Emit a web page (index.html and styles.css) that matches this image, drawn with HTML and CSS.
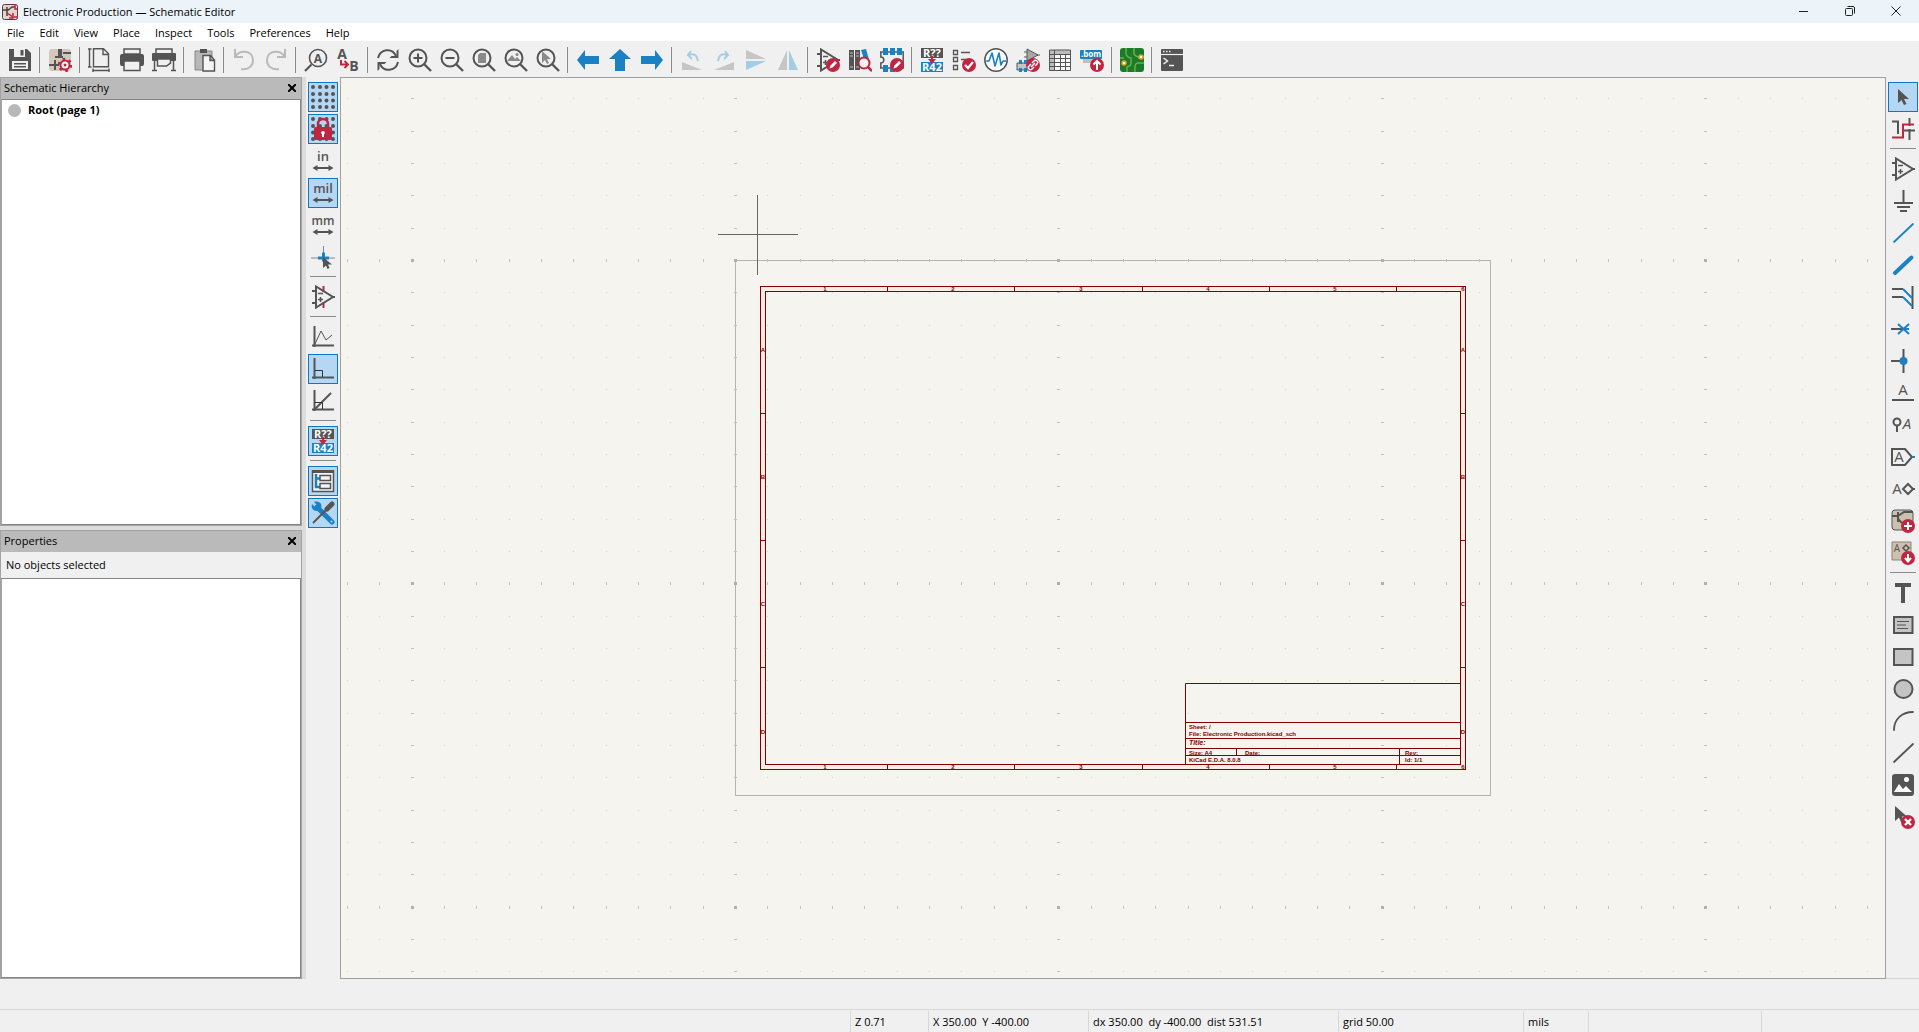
FILE: index.html
```html
<!DOCTYPE html>
<html lang="en">
  <head>
    <meta charset="UTF-8" />
    <meta name="viewport" content="width=device-width, initial-scale=1.0" />
    <title>Electronic Production — Schematic Editor</title>
    <link rel="stylesheet" href="styles.css">
  </head>
  <body>
    <!-- shapes used by more than one icon -->
    <svg class="defs" aria-hidden="true">
      <symbol id="lens" viewBox="0 0 24 24">
        <circle cx="10" cy="10" r="8.500" fill="none" stroke="#545454" stroke-width="2" />
        <path d="M16 16l7 7" stroke="#545454" stroke-width="2.400" />
      </symbol>
      <symbol id="opamp" viewBox="0 0 24 24">
        <path d="M5 1.500v21L22 12zM1 6h4M1 18h4M21 12h3" fill="none" stroke="#545454" stroke-width="2" />
        <path d="M7 8.500h5M7 14.500h5M9.500 12v5" stroke="#545454" stroke-width="1.500" />
      </symbol>
      <symbol id="slash" viewBox="0 0 24 24">
        <circle cx="17" cy="17" r="7" fill="#bf2641" />
        <path d="M13.500 20.500l1-3 4.500-4.500 2 2-4.500 4.500z" fill="#fff" />
      </symbol>
      <symbol id="annotate" viewBox="0 0 24 24">
        <path d="M1 0h22v10H1z" fill="#545454" />
        <path d="M1 14h22v10H1z" fill="#1a81c4" />
        <text x="12" y="9" class="icon-text bold" font-size="11" fill="#fff">R??</text>
        <text x="12" y="23" class="icon-text bold" font-size="11" fill="#fff">R42</text>
        <path d="M11 8h2v3h3l-4 5-4-5h3z" fill="#bf2641" />
      </symbol>
      <symbol id="dots" viewBox="0 0 24 24">
        <path d="M2 2h.01M9 2h.01M15.500 2h.01M22 2h.01M2 9h.01M9 9h.01M15.500 9h.01M22 9h.01M2 15.500h.01M9 15.500h.01M15.500 15.500h.01M22 15.500h.01M2 22h.01M9 22h.01M15.500 22h.01M22 22h.01" stroke="#545454" stroke-width="4" stroke-linecap="round" />
      </symbol>
      <symbol id="unit-arrow" viewBox="0 0 24 24">
        <path d="M5 19h14" stroke="#545454" stroke-width="2" />
        <path d="M1.500 19l5-3v6zM22.500 19l-5-3v6z" fill="#545454" />
      </symbol>
      <symbol id="axes" viewBox="0 0 24 24">
        <path d="M3.500 1v21M1 20.500h22" stroke="#545454" stroke-width="2" fill="none" />
      </symbol>
    </svg>

    <header class="titlebar">
      <svg class="app-icon" viewBox="0 0 16 16">
        <rect x=".5" y=".5" width="15" height="15" rx="2" fill="#e3d3c8" stroke="#5a3b40" />
        <path d="M0 6h5M5 3v9M5 7l5-4h3" fill="none" stroke="#444" stroke-width="1.500" />
        <path d="M5 9l6 4M11 9v5H7M13 0v5h3M12 13h4" fill="none" stroke="#bf2641" stroke-width="1.500" />
      </svg>
      <h1>Electronic Production — Schematic Editor</h1>
      <div class="window-buttons">
        <button aria-label="Minimize"><svg viewBox="0 0 10 10"><path d="M0 5.500h9" /></svg></button>
        <button aria-label="Restore"><svg viewBox="0 0 10 10"><rect x=".5" y="2.500" width="7" height="7" rx="1" /><path d="M2.500 .5H8q1.500 0 1.500 1.500v5.500" /></svg></button>
        <button aria-label="Close"><svg viewBox="0 0 10 10"><path d="M.5 .5l9 9M9.500 .5l-9 9" /></svg></button>
      </div>
    </header>

    <nav class="menubar">
      <button>File</button>
      <button>Edit</button>
      <button>View</button>
      <button>Place</button>
      <button>Inspect</button>
      <button>Tools</button>
      <button>Preferences</button>
      <button>Help</button>
    </nav>

    <div class="toolbar top" role="toolbar" aria-label="Main toolbar">
      <button aria-label="Save"><svg viewBox="0 0 24 24"><path d="M1 1h18l4 4v18H1z" fill="#545454" /><path d="M6 1h11v8H6zM4 13h16v8H4z" fill="#f0f0f0" /><path d="M12.500 2h3v5.500h-3zM6 15h12v1.500H6zM6 18h12v1.500H6z" fill="#545454" /></svg></button>
      <hr>
      <button aria-label="Schematic Setup"><svg viewBox="0 0 24 24"><rect x="1" y="1" width="22" height="22" rx="3" fill="#d3c8bb" /><path d="M1 17h6M7 12v10M7 17h4M11 1v8M7 9h8M15 5h8" fill="none" stroke="#545454" stroke-width="2" /><path d="M12 1v7" stroke="#545454" stroke-width="4" /><circle cx="17" cy="17" r="4.500" fill="#fff" stroke="#bf2641" stroke-width="2" /><circle cx="17" cy="17" r="6" fill="none" stroke="#bf2641" stroke-width="2.500" stroke-dasharray="2.500 3.780" /><circle cx="17" cy="17" r="1.500" fill="#bf2641" /></svg></button>
      <hr>
      <button aria-label="Page Settings"><svg viewBox="0 0 24 24"><path d="M5.500 .8h10l5 5v13h-15zM15 1v5.500h5.500M1.500 1v18M0 1h3.500M0 19h3.500M5 22.500h16M5 20.500v3.500M21 20.500v3.500" fill="none" stroke="#545454" stroke-width="1.400" /></svg></button>
      <button aria-label="Print"><svg viewBox="0 0 24 24"><path d="M4 1h16v5H4z" fill="#f0f0f0" stroke="#545454" stroke-width="1.500" /><rect y="6" width="24" height="12" rx="2" fill="#545454" /><path d="M4 13h16v9.500H4z" fill="#f0f0f0" stroke="#545454" stroke-width="1.500" /></svg></button>
      <button aria-label="Plot"><svg viewBox="0 0 24 24"><path d="M4 1h16v5H4z" fill="#f0f0f0" stroke="#545454" stroke-width="1.500" /><rect y="5" width="24" height="8" rx="1" fill="#545454" /><path d="M5.500 11h13v4l-4 3h-9zM2.500 12v11M21.500 12v11M0 22.500h5M19 22.500h5" fill="#f0f0f0" stroke="#545454" stroke-width="1.500" /></svg></button>
      <hr>
      <button aria-label="Paste"><svg viewBox="0 0 24 24"><path d="M3 3h17v19H3z" fill="#b8b8b8" stroke="#858585" /><path d="M8 1h7v4H8z" fill="#545454" /><path d="M11 7.500h7.500L22.500 12v11H11zM18 8v4.500h4.500" fill="#f5f5f5" stroke="#545454" stroke-width="1.400" /></svg></button>
      <hr>
      <button aria-label="Undo" disabled><svg viewBox="0 0 24 24"><path d="M3 1v8h8M3 9c4-8 18-7 18 3 0 7-6 10-12 9" fill="none" stroke="#b9b9b9" stroke-width="2" /></svg></button>
      <button aria-label="Redo" disabled><svg viewBox="0 0 24 24"><path d="M21 1v8h-8M21 9C17 1 3 2 3 12c0 7 6 10 12 9" fill="none" stroke="#b9b9b9" stroke-width="2" /></svg></button>
      <hr>
      <button aria-label="Find"><svg viewBox="0 0 24 24"><circle cx="14" cy="10" r="8.500" fill="none" stroke="#545454" stroke-width="1.600" /><path d="M7.500 16.500L1 23" stroke="#545454" stroke-width="2.200" /><text x="14" y="14.500" class="icon-text bold" font-size="12">A</text></svg></button>
      <button aria-label="Find and Replace"><svg viewBox="0 0 24 24"><text x="6" y="11" class="icon-text bold" font-size="14">A</text><text x="18" y="23" class="icon-text bold" font-size="14">B</text><path d="M5 12v4.500h6M8.500 13l3.500 3.500L8.500 20" fill="none" stroke="#bf2641" stroke-width="2" /></svg></button>
      <hr>
      <button aria-label="Refresh"><svg viewBox="0 0 24 24"><path d="M2 10C4 1 16-1 20 8M22 14c-2 9-14 11-18 2" fill="none" stroke="#545454" stroke-width="2" /><path d="M22.500 1v9h-9l2-2h5V3zM1.500 23v-9h9l-2 2h-5v5z" fill="#545454" /></svg></button>
      <button aria-label="Zoom In"><svg viewBox="0 0 24 24"><use href="#lens" /><path d="M5.500 10h9M10 5.500v9" stroke="#545454" stroke-width="2" /></svg></button>
      <button aria-label="Zoom Out"><svg viewBox="0 0 24 24"><use href="#lens" /><path d="M5.500 10h9" stroke="#545454" stroke-width="2" /></svg></button>
      <button aria-label="Zoom to Fit"><svg viewBox="0 0 24 24"><use href="#lens" /><path d="M8 5h6v10H6V7z" fill="#8a8a8a" /></svg></button>
      <button aria-label="Zoom to Objects"><svg viewBox="0 0 24 24"><use href="#lens" /><path d="M3 13l5-6 3 4 2-2 4 4z" fill="#8a8a8a" /><circle cx="13" cy="6.500" r="1.500" fill="#8a8a8a" /></svg></button>
      <button aria-label="Zoom to Selection"><svg viewBox="0 0 24 24"><use href="#lens" /><path d="M6 3v12l3-3 2 4 2-1-2-4h4z" fill="#8a8a8a" /></svg></button>
      <hr>
      <button aria-label="Navigate Back"><svg viewBox="0 0 24 24"><path d="M1 12L9 2v6h14v8H9v6z" fill="#1a81c4" /></svg></button>
      <button aria-label="Navigate Up"><svg viewBox="0 0 24 24"><path d="M12 1l11 10h-6v12H7V11H1z" fill="#1a81c4" /></svg></button>
      <button aria-label="Navigate Forward"><svg viewBox="0 0 24 24"><path d="M23 12L15 2v6H1v8h14v6z" fill="#1a81c4" /></svg></button>
      <hr>
      <button aria-label="Rotate Counterclockwise" disabled><svg viewBox="0 0 24 24"><path d="M2 14v8h20z" fill="#c6c6c6" /><path d="M11 3L8 7l4 4M9 7c5-2 8 0 9 6" fill="none" stroke="#a3cde6" stroke-width="2" /></svg></button>
      <button aria-label="Rotate Clockwise" disabled><svg viewBox="0 0 24 24"><path d="M22 14v8H2z" fill="#c6c6c6" /><path d="M13 3l3 4-4 4M15 7c-5-2-8 0-9 6" fill="none" stroke="#a3cde6" stroke-width="2" /></svg></button>
      <button aria-label="Mirror Vertically" disabled><svg viewBox="0 0 24 24"><path d="M2 2v9h20z" fill="#c6c6c6" /><path d="M2 13v9l20-9z" fill="#a3cde6" /></svg></button>
      <button aria-label="Mirror Horizontally" disabled><svg viewBox="0 0 24 24"><path d="M2 22h9V2z" fill="#c6c6c6" /><path d="M13 2v20h9z" fill="#a3cde6" /></svg></button>
      <hr>
      <button aria-label="Symbol Editor"><svg viewBox="0 0 24 24"><use href="#opamp" /><use href="#slash" /></svg></button>
      <button aria-label="Symbol Library Browser"><svg viewBox="0 0 24 24"><path d="M1 2h5v20H1zM7 2h5v20H7z" fill="#545454" /><path d="M2 5h3M2 8h3M8 5h3M8 8h3M2 19h3M8 19h3" stroke="#bbb" /><path d="M13 2l5-1 4 14-4 2z" fill="#1a81c4" /><circle cx="16" cy="15" r="5.500" fill="#f4f4f4" stroke="#bf2641" stroke-width="2" /><path d="M20 19l4 4" stroke="#bf2641" stroke-width="2.500" /></svg></button>
      <button aria-label="Footprint Editor"><svg viewBox="0 0 24 24"><path d="M.8 4h22.400v16H.8v-5a3 3 0 0 0 0-6z" fill="none" stroke="#545454" stroke-width="1.500" /><path d="M3 0h5v7H3zM10 0h5v7h-5zM17 0h5v7h-5zM3 17h5v7H3zM10 17h5v7h-5z" fill="#1a81c4" /><use href="#slash" /></svg></button>
      <hr>
      <button aria-label="Annotate Schematic"><svg viewBox="0 0 24 24"><use href="#annotate" /></svg></button>
      <button aria-label="Electrical Rules Checker"><svg viewBox="0 0 24 24"><path d="M1.500 2.500h4v4h-4zM1.500 9.500h4v4h-4zM1.500 17.500h4v4h-4zM9 4.500h9M9 11.500h5" fill="none" stroke="#545454" stroke-width="1.300" /><circle cx="17" cy="17" r="7" fill="#bf2641" /><path d="M13 17l3 3 5-6" fill="none" stroke="#fff" stroke-width="2.200" /></svg></button>
      <button aria-label="Simulator"><svg viewBox="0 0 24 24"><circle cx="12" cy="12" r="11.200" fill="#fbfbfb" stroke="#545454" stroke-width="1.500" /><path d="M2 13h3l3-8 3 13 4-13 2 12 2-4h3" fill="none" stroke="#1a81c4" stroke-width="1.600" stroke-linejoin="round" /></svg></button>
      <button aria-label="Assign Footprints"><svg viewBox="0 0 24 24"><path d="M11 1v12l11-6z" fill="#a8a8a8" stroke="#545454" /><path d="M8 4h3M8 9h3M21 7h3" stroke="#545454" /><path d="M1 15h14v7H1z" fill="#c5c5c5" stroke="#545454" /><path d="M3 12h3v4H3zM8 12h3v4H8zM3 20h3v4H3zM8 20h3v4H8z" fill="#1a81c4" /><circle cx="17" cy="17" r="7" fill="#bf2641" /><path d="M16 15l2-2a2 2 0 0 1 3 3l-2 2M18 19l-2 2a2 2 0 0 1-3-3l2-2M15 19l4-4" fill="none" stroke="#fff" stroke-width="1.400" /></svg></button>
      <button aria-label="Edit Symbol Fields"><svg viewBox="0 0 24 24"><path d="M1 2h22v20H1z" fill="#fafafa" /><path d="M1 2h5v20H1zM1 2h22v4H1z" fill="#bdbdbd" /><path d="M1.500 2h21v20.500h-21zM1.500 6.500h21M1.500 10.500h21M1.500 14.500h21M1.500 18.500h21M6.500 2v20M12.500 6v16M17.500 6v16" fill="none" stroke="#545454" /></svg></button>
      <button aria-label="Bill of Materials"><svg viewBox="0 0 24 24"><path d="M3 10h18v5H3z" fill="#c0c0c0" /><rect y="2" width="22" height="9" rx="1" fill="#1a81c4" /><text x="11" y="9" class="icon-text bold" font-size="8" fill="#fff">.bom</text><circle cx="17" cy="17" r="7" fill="#bf2641" /><path d="M17 22v-8M13.500 16.500L17 13l3.500 3.500" fill="none" stroke="#fff" stroke-width="2" /></svg></button>
      <hr>
      <button aria-label="PCB Editor"><svg viewBox="0 0 24 24"><rect width="24" height="24" rx="3" fill="#1b7a2b" /><path d="M6 0v5q0 4 5 5v5q0 3-4 4v5M14 0v4q-1 3 4 5h6M24 15h-6q-4 0-3 9M0 10h4" fill="none" stroke="#6ab23c" stroke-width="1.500" /><circle cx="21" cy="9" r="2" fill="#fff" stroke="#e8a326" stroke-width="1.500" /><circle cx="4" cy="15" r="2" fill="#fff" stroke="#e8a326" stroke-width="1.500" /></svg></button>
      <hr>
      <button aria-label="Scripting Console"><svg viewBox="0 0 24 24"><rect x="1" y="1" width="22" height="22" rx="1" fill="#545454" /><path d="M1 6.500h22" stroke="#f0f0f0" stroke-width="1.200" /><path d="M3 3.500h1.500M6 3.500h1.500M9 3.500h1.500" stroke="#f0f0f0" stroke-width="1.500" /><path d="M3.500 10l4 3-4 3M9 17.500h5" fill="none" stroke="#f0f0f0" stroke-width="1.500" /></svg></button>
    </div>

    <div class="workspace">
      <aside class="dock">
        <section class="pane hierarchy">
          <h2>Schematic Hierarchy <button aria-label="Close hierarchy"><svg viewBox="0 0 8 8"><path d="M0 0l8 8M8 0L0 8" /></svg></button></h2>
          <ul class="list">
            <li><span class="dot"></span>Root (page 1)</li>
          </ul>
        </section>
        <section class="pane properties">
          <h2>Properties <button aria-label="Close properties"><svg viewBox="0 0 8 8"><path d="M0 0l8 8M8 0L0 8" /></svg></button></h2>
          <p>No objects selected</p>
          <div class="list"></div>
        </section>
      </aside>

      <div class="toolbar side" role="toolbar" aria-label="Display options">
        <button aria-label="Show Grid" aria-pressed="true"><svg viewBox="0 0 24 24"><use href="#dots" /></svg></button>
        <button aria-label="Grid Overrides" aria-pressed="true"><svg viewBox="0 0 24 24"><use href="#dots" /><path d="M7 11V7a5 5 0 0 1 10 0v4" fill="none" stroke="#bf2641" stroke-width="2.500" /><rect x="3" y="10" width="18" height="13" rx="1.500" fill="#bf2641" /><path d="M12 14a1.800 1.800 0 0 1 1 3.300V20h-2v-2.700a1.800 1.800 0 0 1 1-3.300z" fill="#fff" /></svg></button>
        <button aria-label="Inches"><svg viewBox="0 0 24 24"><text x="12" y="12" class="icon-text semi" font-size="13">in</text><use href="#unit-arrow" /></svg></button>
        <button aria-label="Mils" aria-pressed="true"><svg viewBox="0 0 24 24"><text x="12" y="12" class="icon-text semi" font-size="13">mil</text><use href="#unit-arrow" /></svg></button>
        <button aria-label="Millimeters"><svg viewBox="0 0 24 24"><text x="12" y="12" class="icon-text semi" font-size="12">mm</text><use href="#unit-arrow" /></svg></button>
        <button aria-label="Full-Window Crosshairs"><svg viewBox="0 0 24 24"><path d="M0 13h24M12.500 1v20" stroke="#888" /><path d="M7 13h11M12.500 7.500v9" stroke="#1a81c4" stroke-width="3" /><path d="M12 12v11l3-2.500 1.500 3.500 2-1-1.500-3.500h4z" fill="#545454" /></svg></button>
        <hr>
        <button aria-label="Show Hidden Pins"><svg viewBox="0 0 24 24"><path d="M12.500 1v6M12.500 17v6" stroke="#bf2641" stroke-width="2" /><use href="#opamp" /></svg></button>
        <hr>
        <button aria-label="Free Angle"><svg viewBox="0 0 24 24"><use href="#axes" /><path d="M4 19l6-13 5 9 6-5" fill="none" stroke="#545454" /></svg></button>
        <button aria-label="90 Degree Lines" aria-pressed="true"><svg viewBox="0 0 24 24"><use href="#axes" /><path d="M4 13.500h7.500V20" fill="none" stroke="#333" /></svg></button>
        <button aria-label="45 Degree Lines"><svg viewBox="0 0 24 24"><use href="#axes" /><path d="M4 20L20 4" stroke="#545454" stroke-width="2" /><path d="M4 13.500h7.500V20" fill="none" stroke="#333" /></svg></button>
        <hr>
        <button aria-label="Annotate Automatically" aria-pressed="true"><svg viewBox="0 0 24 24"><use href="#annotate" /></svg></button>
        <hr>
        <button aria-label="Hierarchy Navigator" aria-pressed="true"><svg viewBox="0 0 24 24"><path d="M1.500 2h21v20.500h-21z" fill="#f5f5f5" stroke="#545454" stroke-width="1.500" /><path d="M1 1h22v3H1z" fill="#545454" /><path d="M5 5v13h4M5 9.500h4" fill="none" stroke="#1a81c4" stroke-width="2.500" /><path d="M9 6.500h10.500v5H9zM9 14.500h10.500v5H9z" fill="#f5f5f5" stroke="#545454" stroke-width="1.500" /></svg></button>
        <button aria-label="Properties Manager" aria-pressed="true"><svg viewBox="0 0 24 24"><path d="M6 6l15 15" stroke="#1a81c4" stroke-width="5" stroke-linecap="round" /><path d="M3 1l4 4-2 2-4-4c-1 4 1 7 5 7 4-1 5-4 4-7-1-2-4-3-7-2z" fill="#1a81c4" /><path d="M2 22L15 9" stroke="#545454" stroke-width="1.800" /><path d="M16 8l5-5" stroke="#545454" stroke-width="5" stroke-linecap="round" /><circle cx="20.500" cy="20.500" r="1" fill="#b5daf7" /></svg></button>
      </div>

      <main class="editor">
        <!-- A4 page with the default drawing sheet -->
        <svg class="sheet" viewBox="0 0 756 536" role="img" aria-label="Drawing sheet">
          <rect class="page" x=".5" y=".5" width="755" height="535" />
          <path class="margin" d="M25 26h706v484H25zM30 31v474h696V31z" />
          <g class="frame">
            <rect x="25.500" y="26.500" width="705" height="483" />
            <rect x="30.500" y="31.500" width="695" height="473" />
            <path d="M152.500 26v5M279.500 26v5M407.500 26v5M534.500 26v5M661.500 26v5" />
            <path d="M152.500 505v5M279.500 505v5M407.500 505v5M534.500 505v5M661.500 505v5" />
            <path d="M25 153.500h5M25 280.500h5M25 407.500h5M726 153.500h5M726 280.500h5M726 407.500h5" />
            <path d="M450.500 504V423.500H725M450 462.500h275M450 478.500h275M450 488.500h275M450 495.500h275M501.500 489v7M664.500 489v15" />
          </g>
          <g class="zone">
            <text x="90" y="31">1</text><text x="218" y="31">2</text><text x="346" y="31">3</text><text x="473" y="31">4</text><text x="600" y="31">5</text><text x="728" y="31">6</text>
            <text x="90" y="509">1</text><text x="218" y="509">2</text><text x="346" y="509">3</text><text x="473" y="509">4</text><text x="600" y="509">5</text><text x="728" y="509">6</text>
            <text x="28" y="92">A</text><text x="28" y="219">B</text><text x="28" y="346">C</text><text x="28" y="474">D</text>
            <text x="728" y="92">A</text><text x="728" y="219">B</text><text x="728" y="346">C</text><text x="728" y="474">D</text>
          </g>
          <g class="title-block">
            <text x="454" y="469">Sheet: /</text>
            <text x="454" y="476">File: Electronic Production.kicad_sch</text>
            <text x="454" y="485" class="title">Title:</text>
            <text x="454" y="495">Size: A4</text>
            <text x="510" y="495">Date:</text>
            <text x="670" y="495">Rev:</text>
            <text x="454" y="502">KiCad E.D.A. 8.0.8</text>
            <text x="670" y="502">Id: 1/1</text>
          </g>
        </svg>
        <canvas id="grid"></canvas>
      </main>

      <div class="toolbar side right" role="toolbar" aria-label="Drawing tools">
        <button aria-label="Select" aria-pressed="true"><svg viewBox="0 0 24 24"><path d="M7 4v14l3.500-3 2.500 5 2.500-1-2.500-5h5z" fill="#545454" /></svg></button>
        <button aria-label="Highlight Net"><svg viewBox="0 0 24 24"><path d="M1 4.500h6V17M13 13.500h11M18.500 1v8M18.500 12v11" fill="none" stroke="#545454" stroke-width="2" /><path d="M1 20.500h11V7.500h11" fill="none" stroke="#bf2641" stroke-width="2" /></svg></button>
        <hr>
        <button aria-label="Place Symbols"><svg viewBox="0 0 24 24"><use href="#opamp" /></svg></button>
        <button aria-label="Place Power"><svg viewBox="0 0 24 24"><path d="M12.500 1v12M3 14h19M6 18h13M9 22h7" stroke="#545454" stroke-width="2" /></svg></button>
        <button aria-label="Draw Wires"><svg viewBox="0 0 24 24"><path d="M3 21L22 3" stroke="#1a81c4" stroke-width="1.800" stroke-linecap="round" /></svg></button>
        <button aria-label="Draw Buses"><svg viewBox="0 0 24 24"><path d="M4 20L20.500 4.500" stroke="#1a81c4" stroke-width="4" stroke-linecap="round" /></svg></button>
        <button aria-label="Wire to Bus Entries"><svg viewBox="0 0 24 24"><path d="M1 4h11M1 12h11M21.500 1v23" stroke="#545454" stroke-width="2" /><path d="M12 4l9 9M12 12l9 9" stroke="#1a81c4" stroke-width="2" /></svg></button>
        <button aria-label="No-Connect Flags"><svg viewBox="0 0 24 24"><path d="M0 12h12" stroke="#545454" stroke-width="2" /><path d="M7 7l11 10M18 7L7 17M12 12h6" stroke="#1a81c4" stroke-width="2" /></svg></button>
        <button aria-label="Junctions"><svg viewBox="0 0 24 24"><path d="M0 12h12M12.500 0v24" stroke="#545454" stroke-width="2" /><circle cx="12.500" cy="12" r="4" fill="#1a81c4" /></svg></button>
        <button aria-label="Net Labels"><svg viewBox="0 0 24 24"><text x="12" y="14" class="icon-text" font-size="15">A</text><path d="M1 19h22" stroke="#545454" stroke-width="2" /></svg></button>
        <button aria-label="Net Class Directives"><svg viewBox="0 0 24 24"><circle cx="6" cy="9" r="3.500" fill="none" stroke="#545454" stroke-width="2" /><path d="M6 12v7" stroke="#545454" stroke-width="2" /><text x="16" y="16" class="icon-text" font-style="italic" font-size="15">A</text></svg></button>
        <button aria-label="Global Labels"><svg viewBox="0 0 24 24"><path d="M1 4h13l7 8-7 8H1z" fill="none" stroke="#545454" stroke-width="2" /><text x="8" y="17" class="icon-text" font-size="15">A</text><path d="M21 12h3" stroke="#1a81c4" stroke-width="2" /></svg></button>
        <button aria-label="Hierarchical Labels"><svg viewBox="0 0 24 24"><text x="6" y="17" class="icon-text" font-size="15">A</text><path d="M17 7l5 5-5 5-5-5zM21 12h3" fill="none" stroke="#545454" stroke-width="2" /></svg></button>
        <button aria-label="Sheets"><svg viewBox="0 0 24 24"><rect x="1" y="1" width="21" height="20" rx="3" fill="#cdc0ad" stroke="#545454" /><path d="M1 7h6M7 3v10M7 7l6-4h9M7 10l4 4" fill="none" stroke="#545454" stroke-width="2" /><circle cx="17" cy="17" r="7" fill="#bf2641" /><path d="M13 17h8M17 13v8" stroke="#fff" stroke-width="2" /></svg></button>
        <button aria-label="Import Sheet Pins"><svg viewBox="0 0 24 24"><path d="M1 1h19v18H1z" fill="#cdc0ad" stroke="#8c8378" /><text x="6" y="11" class="icon-text" font-size="10">A</text><path d="M15 4l3 3-3 3-3-3z" fill="none" stroke="#545454" stroke-width="1.500" /><circle cx="17" cy="17" r="7" fill="#bf2641" /><path d="M17 13v7M14 17l3 3.500 3-3.500" fill="none" stroke="#fff" stroke-width="2" /></svg></button>
        <hr>
        <button aria-label="Text"><svg viewBox="0 0 24 24"><path d="M4 2h16v4h-6v16h-4V6H4z" fill="#545454" /></svg></button>
        <button aria-label="Text Boxes"><svg viewBox="0 0 24 24"><path d="M3 4h18.500v16H3z" fill="#c4c4c4" stroke="#545454" stroke-width="2" /><path d="M6 8.500h12M6 12h9M6 15.500h11" stroke="#545454" stroke-width="1.200" /></svg></button>
        <button aria-label="Rectangles"><svg viewBox="0 0 24 24"><path d="M3 4h18.500v16H3z" fill="#c4c4c4" stroke="#545454" stroke-width="2" /></svg></button>
        <button aria-label="Circles"><svg viewBox="0 0 24 24"><circle cx="12.500" cy="12" r="9" fill="#c4c4c4" stroke="#545454" stroke-width="2" /></svg></button>
        <button aria-label="Arcs"><svg viewBox="0 0 24 24"><path d="M3 21C3 10 11 3 22 3" fill="none" stroke="#545454" stroke-width="1.800" stroke-linecap="round" /></svg></button>
        <button aria-label="Lines"><svg viewBox="0 0 24 24"><path d="M3 21L22 3" stroke="#545454" stroke-width="1.800" stroke-linecap="round" /></svg></button>
        <button aria-label="Images"><svg viewBox="0 0 24 24"><rect x="1" y="1" width="22" height="22" rx="3" fill="#545454" /><path d="M3 19l5-8 4 5 3-3 6 6z" fill="#fff" /><circle cx="15.500" cy="6.500" r="2.500" fill="#fff" /></svg></button>
        <button aria-label="Delete"><svg viewBox="0 0 24 24"><path d="M4 1v15l4-3.500L10 17l3-1-2-4.500h5z" fill="#545454" /><circle cx="17" cy="17" r="7" fill="#bf2641" /><path d="M14 14l6 6M20 14l-6 6" stroke="#fff" stroke-width="2.400" /></svg></button>
      </div>
    </div>

    <div class="message-panel"></div>

    <footer class="statusbar">
      <span></span>
      <span>Z 0.71</span>
      <span>X 350.00&nbsp; Y -400.00</span>
      <span>dx 350.00&nbsp; dy -400.00&nbsp; dist 531.51</span>
      <span>grid 50.00</span>
      <span>mils</span>
      <span></span>
      <span></span>
    </footer>

    <script>
      const canvas = document.getElementById("grid");

      // Page origin inside the editor and the grid step at zoom 0.71
      const origin = { x: 394, y: 182 };
      const cursor = { x: 416, y: 156 };
      const step = 32.34;

      function drawGrid() {
        const width = canvas.clientWidth;
        const height = canvas.clientHeight;
        canvas.width = width;
        canvas.height = height;
        const ctx = canvas.getContext("2d");

        for (let i = -Math.floor(origin.x / step); origin.x + i * step < width; i++) {
          for (let j = -Math.floor(origin.y / step); origin.y + j * step < height; j++) {
            const x = Math.round(origin.x + i * step);
            const y = Math.round(origin.y + j * step);
            const majorX = i % 10 === 0;
            const majorY = j % 10 === 0;
            // every tenth line gets a heavier mark
            ctx.fillStyle = majorX && majorY ? "#b0b0ad" : majorX || majorY ? "#c2c2be" : "#d6d6d2";
            ctx.fillRect(majorX ? x - 1 : x, majorY ? y - 1 : y, majorX ? 3 : 1, majorY ? 3 : 1);
          }
        }

        ctx.fillStyle = "#666";
        ctx.fillRect(cursor.x - 39, cursor.y, 80, 1);
        ctx.fillRect(cursor.x, cursor.y - 39, 1, 80);
      }

      window.addEventListener("resize", drawGrid);
      drawGrid();
    </script>
  </body>
</html>
```

FILE: styles.css
```css
* {
  box-sizing: border-box;
}

body {
  display: flex;
  flex-direction: column;
  height: 100vh;
  margin: 0;
  overflow: hidden;
  font-family: "Open Sans", "Noto Sans", sans-serif;
  font-size: 11px;
  line-height: 16px;
  color: #000;
  background-color: #f0f0f0;
}

button {
  padding: 0;
  font: inherit;
  color: inherit;
  background: none;
  border: none;
}

.defs {
  position: absolute;
  width: 0;
  height: 0;
}

/* Title bar */

.titlebar {
  display: flex;
  flex: none;
  align-items: center;
  gap: 5px;
  height: 23px;
  padding-left: 2px;
  background-color: #ecf3f9;
}

.titlebar h1 {
  flex: 1;
  margin: 0;
  font-size: 11px;
  font-weight: normal;
}

.app-icon {
  width: 16px;
  height: 16px;
}

.window-buttons {
  display: flex;
}

.window-buttons button {
  width: 46px;
  height: 20px;
}

.window-buttons svg {
  width: 10px;
  height: 10px;
  fill: none;
  stroke: #222;
}

/* Menu */

.menubar {
  display: flex;
  flex: none;
  gap: 15px;
  height: 18px;
  padding: 2px 7px 0;
  background-color: #fff;
}

/* Toolbars */

.toolbar {
  display: flex;
  flex: none;
  gap: 2px;
}

.toolbar button {
  display: flex;
  flex: none;
  align-items: center;
  justify-content: center;
  width: 30px;
  height: 30px;
  border: 1px solid transparent;
}

.toolbar button:hover {
  background-color: #d8e6f2;
}

.toolbar button[aria-pressed="true"] {
  background-color: #b5d7f3;
  border-color: #0f76c4;
}

.toolbar button:disabled {
  background: none;
}

.toolbar svg {
  width: 24px;
  height: 24px;
}

.toolbar hr {
  flex: none;
  margin: 0;
  background-color: #8a8a8a;
  border: none;
}

.top {
  height: 36px;
  padding: 4px 5px 2px;
}

.top hr {
  width: 1px;
  height: 26px;
  margin: 2px 3px 0 2px;
}

.side {
  flex-direction: column;
  width: 34px;
  padding: 5px 2px;
  background-color: #f0f0f0;
}

.side hr {
  width: 26px;
  height: 1px;
  margin: 2px 2px 3px;
}

.right {
  width: 33px;
  border-bottom: 1px solid #d4d4d4;
}

.icon-text {
  font-family: "Open Sans", "Noto Sans", sans-serif;
  text-anchor: middle;
}

.icon-text:not([fill]) {
  fill: #545454;
}

.semi {
  font-weight: 600;
}

.bold {
  font-weight: bold;
}

/* Workspace */

.workspace {
  display: flex;
  flex: 1;
  min-height: 0;
  background-color: #dcdcdc;
}

.dock {
  display: flex;
  flex: none;
  flex-direction: column;
  gap: 4px;
  width: 302px;
  margin-right: 4px;
}

.pane {
  display: flex;
  flex: 1;
  flex-direction: column;
  min-height: 0;
  border: 1px solid #a3a3a3;
}

.pane h2 {
  display: flex;
  flex: none;
  align-items: center;
  justify-content: space-between;
  height: 21px;
  margin: 0;
  padding: 0 5px 2px 3px;
  font-size: 11px;
  font-weight: normal;
  background-color: #bababa;
}

.pane h2 svg {
  display: block;
  width: 8px;
  height: 8px;
  stroke: #000;
  stroke-width: 2;
}

.pane p {
  flex: none;
  margin: 0;
  padding: 5px;
  background-color: #f0f0f0;
}

.list {
  flex: 1;
  margin: 0;
  padding: 2px 6px;
  list-style: none;
  background-color: #fff;
  border: 1px solid #868686;
  border-left-color: #a3a3a3;
}

.list li {
  display: flex;
  align-items: center;
  gap: 7px;
  font-weight: bold;
}

.dot {
  width: 13px;
  height: 13px;
  background-color: #b8b8b8;
  border-radius: 50%;
}

/* Editor */

.editor {
  position: relative;
  flex: 1;
  min-width: 0;
  overflow: hidden;
  background-color: #f5f4ef;
  border: 1px solid #a0a0a0;
}

#grid {
  position: absolute;
  top: 0;
  left: 0;
  width: 100%;
  height: 100%;
}

.sheet {
  position: absolute;
  top: 182px;
  left: 394px;
  width: 756px;
  height: 536px;
}

.page {
  fill: none;
  stroke: #b4b4b1;
}

.margin {
  fill: #fcece5;
  fill-rule: evenodd;
}

.frame {
  fill: none;
  stroke: #840000;
}

.zone,
.title-block {
  font-family: "Liberation Sans", sans-serif;
  font-size: 6px;
  font-weight: bold;
  fill: #840000;
}

.zone {
  text-anchor: middle;
}

.title {
  font-size: 7px;
  font-style: italic;
}

/* Bottom of the window */

.message-panel {
  flex: none;
  height: 30px;
}

.statusbar {
  display: grid;
  flex: none;
  grid-template-columns: 1fr 78px 160px 250px 185px 65px 173px 158px;
  height: 23px;
  padding-top: 1px;
  border-top: 1px solid #d7d7d7;
}

.statusbar span {
  padding: 3px 4px;
  white-space: nowrap;
  border-left: 1px solid #d7d7d7;
}

.statusbar span:first-child {
  border-left: none;
}
```
